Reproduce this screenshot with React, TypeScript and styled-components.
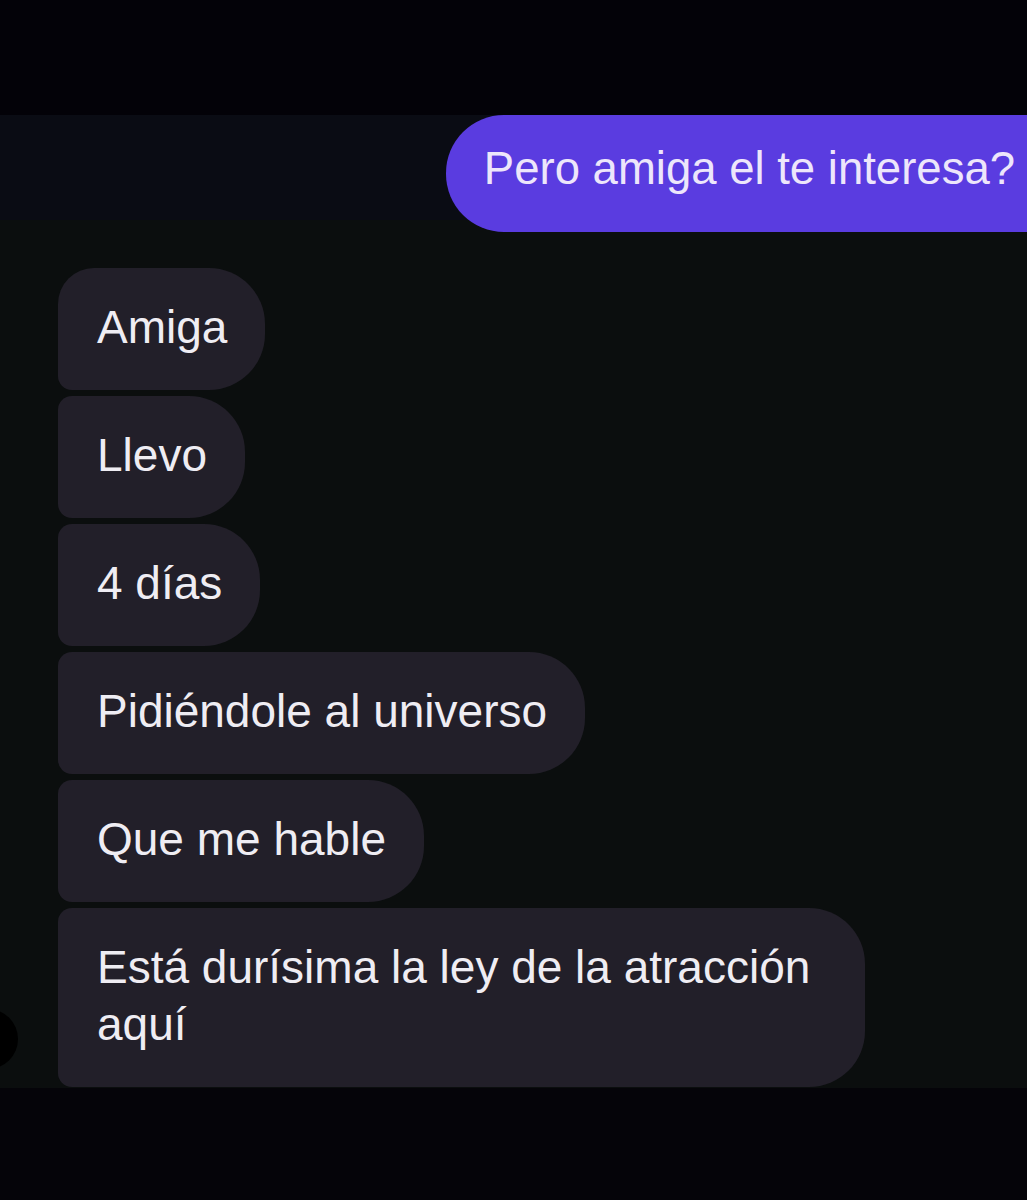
import { createGlobalStyle, styled } from 'styled-components';

interface Message {
  text: string;
  avatar?: boolean;
}

const received: Message[] = [
  { text: 'Amiga' },
  { text: 'Llevo' },
  { text: '4 días' },
  { text: 'Pidiéndole al universo' },
  { text: 'Que me hable' },
  { text: 'Está durísima la ley de la atracción aquí', avatar: true },
];

const GlobalStyle = createGlobalStyle`
  html, body {
    margin: 0;
    padding: 0;
    background: #040309;
  }

  body {
    font-family: "Liberation Sans", Arial, sans-serif;
    -webkit-font-smoothing: antialiased;
  }
`;

const Screen = styled.main`
  width: 1027px;
  height: 1200px;
  display: flex;
  flex-direction: column;
  overflow: hidden;
  background: #040309;
`;

const TopBand = styled.div`
  height: 115px;
  flex: none;
  background: #030208;
`;

const Thread = styled.section`
  height: 973px;
  flex: none;
  display: flex;
  flex-direction: column;
  gap: 36px;
  background: linear-gradient(to bottom, #0a0c14 0, #0a0c14 105px, #0b0e0e 105px);
`;

const SentRow = styled.div`
  display: flex;
  justify-content: flex-end;
  margin-right: -34px;
`;

const SentBubble = styled.div`
  padding: 27px 46px 36px 38px;
  background: #5a3ce0;
  color: #ede6fb;
  font-size: 45.5px;
  line-height: 54px;
  white-space: nowrap;
  border-radius: 58px 0 0 58px;
`;

const ReceivedList = styled.div`
  display: flex;
  flex-direction: column;
  gap: 6px;
`;

const Row = styled.div`
  display: flex;
  align-items: flex-end;
`;

const AvatarSlot = styled.div`
  width: 58px;
  flex: none;
  align-self: stretch;
  display: flex;
  align-items: flex-end;
`;

const Avatar = styled.div`
  width: 60px;
  height: 60px;
  margin: 0 0 18px -42px;
  border-radius: 50%;
  background: #000;
  flex: none;
`;

const Bubble = styled.div<{ $first?: boolean; $wide?: boolean }>`
  box-sizing: border-box;
  max-width: ${({ $wide }) => ($wide ? '807px' : 'none')};
  padding: 31px 38px 34px 39px;
  background: #221f29;
  color: #efedf3;
  font-size: 46px;
  line-height: 57px;
  border-radius: ${({ $first }) => ($first ? '36px' : '14px')} 56px 56px 14px;
`;

const BottomBand = styled.div`
  flex: 1;
  background: #050409;
`;

function App() {
  return (
    <Screen>
      <GlobalStyle />
      <TopBand />
      <Thread>
        <SentRow>
          <SentBubble>Pero amiga el te interesa?</SentBubble>
        </SentRow>
        <ReceivedList>
          {received.map((m, i) => (
            <Row key={m.text}>
              <AvatarSlot>{m.avatar && <Avatar />}</AvatarSlot>
              <Bubble $first={i === 0} $wide={m.avatar}>
                {m.text}
              </Bubble>
            </Row>
          ))}
        </ReceivedList>
      </Thread>
      <BottomBand />
    </Screen>
  );
}

export default App;
